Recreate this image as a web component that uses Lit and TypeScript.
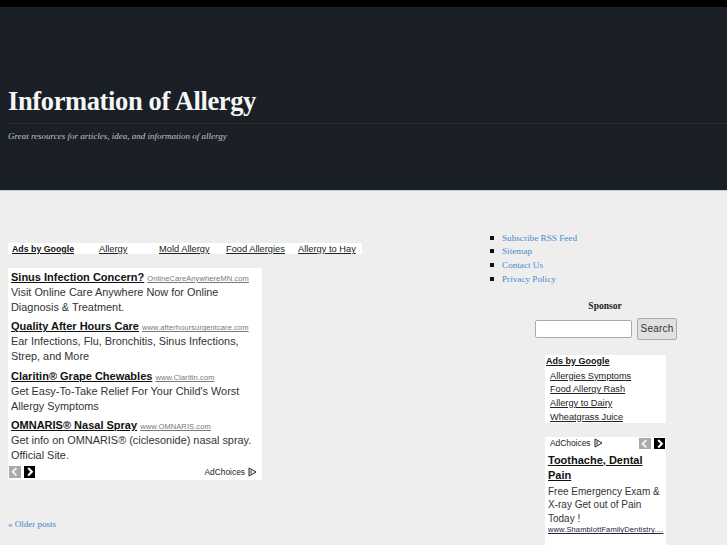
import { LitElement, html, css } from "lit";
import { customElement } from "lit/decorators.js";

const prev = (cls: string) => html`<span class="nav ${cls}"><svg viewBox="0 0 11 11" width="11.5" height="11.5"><path d="M7 2 L3.5 5.5 L7 9" fill="none" stroke="currentColor" stroke-width="2"/></svg></span>`;
const next = (cls: string) => html`<span class="nav ${cls}"><svg viewBox="0 0 11 11" width="11.5" height="11.5"><path d="M4 2 L7.5 5.5 L4 9" fill="none" stroke="currentColor" stroke-width="2"/></svg></span>`;
const choices = html`<span class="choices">AdChoices <svg viewBox="0 0 9 10" width="9" height="10"><path d="M1 1 L8 5 L1 9 Z M3 3.2 V6.8" fill="none" stroke="#222" stroke-width="1"/></svg></span>`;

@customElement("app-root")
export class AppRoot extends LitElement {
  static styles = css`
    :host { display: block; width: 727px; height: 545px; overflow: hidden; background: #eee; font-family: "Liberation Serif", serif; }
    .top { height: 7px; background: #000; }
    .head {
      height: 184px; box-sizing: border-box; padding: 78px 0 0 8px; background-color: #1a1f26;
      background-image: radial-gradient(circle at 1px 1px, #1c2128 1px, transparent 1px);
      background-size: 4px 4px; border-bottom: 1px solid #b9cfe0; color: #fff;
    }
    h1 { margin: 0; height: 38px; font: bold 26.5px/32px "Liberation Serif", serif; letter-spacing: -0.37px; color: #f6f6f6; border-bottom: 1px solid #272c33; }
    .sub { margin: 6px 0 0; font: italic 9px/13px "Liberation Serif", serif; color: #c4c4c4; }
    .main { display: flex; }
    .left { width: 482px; padding: 52px 0 0 8px; box-sizing: border-box; }
    .adbar { display: flex; width: 354px; height: 11px; background: #fff; font: 9.3px/12px "Liberation Sans", sans-serif; }
    .adbar a { color: #222; text-decoration: underline; white-space: nowrap; }
    .adbar a.lead { font-weight: bold; font-size: 8.8px; color: #111; }
    .adblock { width: 254px; height: 212px; margin-top: 14px; background: #fff; padding: 1px 3px 0; box-sizing: border-box; font-family: "Liberation Sans", sans-serif; }
    .ad { margin-bottom: 3.33px; }
    .ad-t { font-size: 11px; line-height: 16px; height: 16px; white-space: nowrap; }
    .ad-t b { color: #111; text-decoration: underline; }
    .ad-t span { font-size: 7.5px; color: #777; text-decoration: underline; letter-spacing: 0.1px; }
    .ad p { margin: 0; font-size: 10.9px; line-height: 15px; color: #333; }
    .foot { display: flex; align-items: center; justify-content: space-between; padding: 0 2px 0 0; margin: 3px 0 0 -2px; }
    .navs { display: flex; gap: 3px; }
    .nav { display: flex; width: 11.5px; height: 11.5px; }
    .nav.off { background: #aaa; color: #eee; }
    .nav.on { background: #000; color: #fff; }
    .choices { display: inline-flex; align-items: center; gap: 3px; font-size: 8.4px; color: #222; }
    .older { display: block; margin-top: 39px; font-size: 9px; color: #3f83c8; }
    .side { width: 245px; padding-top: 40px; }
    ul { margin: 0; padding: 0; list-style: none; }
    li { display: flex; align-items: center; height: 13.67px; font-size: 9.2px; color: #4a8ccb; white-space: nowrap; }
    li::before { content: ""; width: 4px; height: 4px; background: #111; margin: 0 8px 0 8px; }
    h3 { margin: 14px 0 0 0; width: 246px; text-align: center; font: bold 9.5px/12px "Liberation Serif", serif; color: #222; }
    .search { display: flex; align-items: center; gap: 5px; margin: 6px 0 0 53px; }
    .box { width: 97px; height: 18px; background: #fff; border: 1px solid #aaa; border-radius: 2px; box-sizing: border-box; }
    .btn { width: 40px; height: 22px; box-sizing: border-box; border: 1px solid #aaa; border-radius: 2px; background: #e0e0e0; font: 10px/20px "Liberation Sans", sans-serif; letter-spacing: 0.2px; text-align: center; color: #333; }
    .links { width: 121px; height: 68px; margin: 15px 0 0 63px; background: #fff; box-sizing: border-box; font-family: "Liberation Sans", sans-serif; padding: 0 0 0 1px; }
    .links b { display: block; font-size: 9px; line-height: 13px; margin-bottom: 2px; color: #111; text-decoration: underline; }
    .links a { display: block; margin-left: 4px; font-size: 9.2px; line-height: 13.67px; color: #222; text-decoration: underline; }
    .card { width: 121px; height: 120px; margin: 14px 0 0 63px; background: #fff; box-sizing: border-box; padding: 0 0 0 3px; font-family: "Liberation Sans", sans-serif; }
    .card-h { display: flex; align-items: flex-start; justify-content: space-between; height: 16px; box-sizing: border-box; padding: 1px 1px 0 2px; }
    .card b { display: block; font-size: 11px; line-height: 15px; color: #111; text-decoration: underline; }
    .card p { margin: 2px 0 0; font-size: 10px; line-height: 13.6px; color: #333; }
    .card a { display: block; margin-top: -1px; font-size: 7.5px; line-height: 11px; color: #224; text-decoration: underline; white-space: nowrap; letter-spacing: 0.13px; }
  `;
  render() {
    const ads = [
      ["Sinus Infection Concern?", "OnlineCareAnywhereMN.com", "Visit Online Care Anywhere Now for Online Diagnosis & Treatment."],
      ["Quality After Hours Care", "www.afterhoursurgentcare.com", "Ear Infections, Flu, Bronchitis, Sinus Infections, Strep, and More"],
      ["Claritin® Grape Chewables", "www.Claritin.com", "Get Easy-To-Take Relief For Your Child's Worst Allergy Symptoms"],
      ["OMNARIS® Nasal Spray", "www.OMNARIS.com", "Get info on OMNARIS® (ciclesonide) nasal spray. Official Site."],
    ];
    return html`
      <div class="top"></div>
      <header class="head">
        <h1>Information of Allergy</h1>
        <p class="sub">Great resources for articles, idea, and information of allergy</p>
      </header>
      <div class="main">
        <div class="left">
          <div class="adbar">
            <a class="lead" style="margin-left:4px;width:87px">Ads by Google</a>
            <a style="width:60px">Allergy</a>
            <a style="width:67px">Mold Allergy</a>
            <a style="width:72px">Food Allergies</a>
            <a>Allergy to Hay</a>
          </div>
          <div class="adblock">
            ${ads.map(a => html`<div class="ad"><div class="ad-t"><b>${a[0]}</b> <span>${a[1]}</span></div><p>${a[2]}</p></div>`)}
            <div class="foot"><span class="navs">${prev("off")}${next("on")}</span>${choices}</div>
          </div>
          <a class="older">« Older posts</a>
        </div>
        <aside class="side">
          <ul><li>Subscribe RSS Feed</li><li>Sitemap</li><li>Contact Us</li><li>Privacy Policy</li></ul>
          <h3>Sponsor</h3>
          <div class="search"><span class="box"></span><span class="btn">Search</span></div>
          <div class="links"><b>Ads by Google</b><a>Allergies Symptoms</a><a>Food Allergy Rash</a><a>Allergy to Dairy</a><a>Wheatgrass Juice</a></div>
          <div class="card">
            <div class="card-h">${choices}<span class="navs">${prev("off")}${next("on")}</span></div>
            <b>Toothache, Dental Pain</b>
            <p>Free Emergency Exam & X-ray Get out of Pain Today !</p>
            <a>www.ShamblottFamilyDentistry....</a>
          </div>
        </aside>
      </div>`;
  }
}
